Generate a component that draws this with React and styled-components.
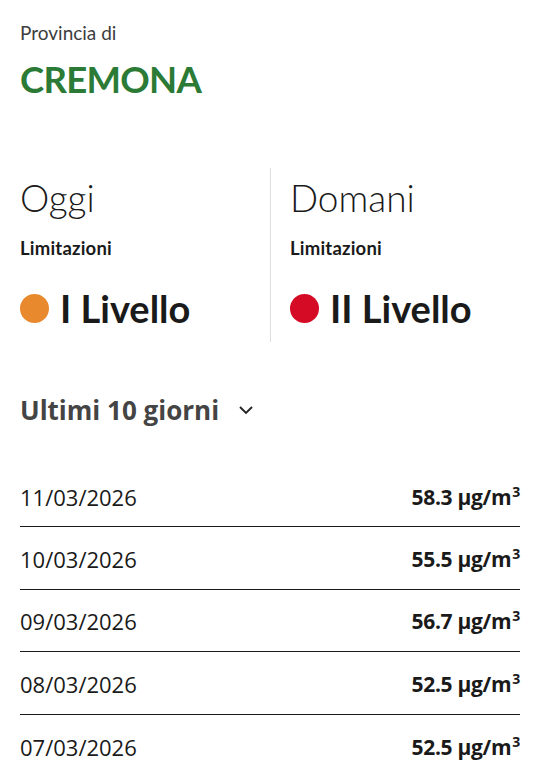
import styled, { createGlobalStyle } from "styled-components";

const GlobalStyle = createGlobalStyle`
  body {
    margin: 0;
    background: #fff;
    font-family: "Open Sans", sans-serif;
  }
`;

const rows = [
  { date: "11/03/2026", value: "58.3" },
  { date: "10/03/2026", value: "55.5" },
  { date: "09/03/2026", value: "56.7" },
  { date: "08/03/2026", value: "52.5" },
  { date: "07/03/2026", value: "52.5" },
];

const Page = styled.div`
  padding: 22px 20px 0 20px;
  color: #1a1a1a;
`;

const Province = styled.div`
  font-family: Lato, sans-serif;
  font-size: 19px;
  color: #3d3d3d;
  line-height: 22px;
`;

const City = styled.h1`
  font-family: Lato, sans-serif;
  font-weight: 700;
  font-size: 36.5px;
  line-height: 46px;
  color: #2b7a36;
  margin: 12px 0 0 0;
  letter-spacing: -0.7px;
`;

const Forecast = styled.div`
  display: grid;
  grid-template-columns: 250px 1px 1fr;
  margin-top: 66px;
`;

const Divider = styled.div`
  background: #dedede;
`;

const Day = styled.div`
  padding-left: ${(p) => (p.$right ? "19px" : "0")};
  padding-bottom: 14px;
`;

const DayTitle = styled.h2`
  font-family: Lato, sans-serif;
  font-weight: 300;
  font-size: 37px;
  line-height: 44px;
  margin: 8px 0 0 0;
  color: #1a1a1a;
`;

const Label = styled.div`
  font-family: Lato, sans-serif;
  font-weight: 700;
  font-size: 18.5px;
  line-height: 20px;
  margin-top: 18px;
  letter-spacing: 0.2px;
`;

const Level = styled.div`
  display: flex;
  align-items: center;
  gap: 11px;
  margin-top: 30px;
  font-family: Lato, sans-serif;
  font-weight: 700;
  font-size: 38px;
  line-height: 40px;
`;

const Dot = styled.span`
  width: 29px;
  height: 29px;
  border-radius: 50%;
  background: ${(p) => p.$color};
  flex: none;
`;

const HistoryToggle = styled.button`
  display: flex;
  align-items: center;
  gap: 19px;
  margin-top: 51px;
  padding: 0;
  border: 0;
  background: none;
  font-family: "Open Sans", sans-serif;
  font-weight: 700;
  font-size: 26px;
  line-height: 34px;
  color: #444;
  cursor: pointer;
`;

const List = styled.div`
  margin-top: 38px;
`;

const Row = styled.div`
  display: flex;
  justify-content: space-between;
  align-items: center;
  height: 62.4px;
  padding-top: 2px;
  box-sizing: border-box;
  border-bottom: ${(p) => (p.$last ? "none" : "1px solid #1a1a1a")};
`;

const Date = styled.span`
  font-family: "Open Sans", sans-serif;
  font-size: 22px;
  color: #1a1a1a;
`;

const Value = styled.span`
  font-family: "Open Sans", sans-serif;
  font-weight: 700;
  font-size: 21px;
  letter-spacing: -0.3px;
  color: #1a1a1a;
  sup {
    font-size: 14px;
    line-height: 0;
    margin-left: 1px;
  }
`;

const Chevron = () => (
  <svg width="16" height="10" viewBox="0 0 16 10" fill="none">
    <path d="M2 2l6 6 6-6" stroke="#222" strokeWidth="1.8" />
  </svg>
);

export default function App() {
  return (
    <>
      <GlobalStyle />
      <Page>
        <Province>Provincia di</Province>
        <City>CREMONA</City>
        <Forecast>
          <Day>
            <DayTitle>Oggi</DayTitle>
            <Label>Limitazioni</Label>
            <Level>
              <Dot $color="#e8892e" />I Livello
            </Level>
          </Day>
          <Divider />
          <Day $right>
            <DayTitle>Domani</DayTitle>
            <Label>Limitazioni</Label>
            <Level>
              <Dot $color="#d50a24" />II Livello
            </Level>
          </Day>
        </Forecast>
        <HistoryToggle>
          Ultimi 10 giorni <Chevron />
        </HistoryToggle>
        <List>
          {rows.map((r, i) => (
            <Row key={r.date} $last={i === rows.length - 1}>
              <Date>{r.date}</Date>
              <Value>
                {r.value} µg/m<sup>3</sup>
              </Value>
            </Row>
          ))}
        </List>
      </Page>
    </>
  );
}
